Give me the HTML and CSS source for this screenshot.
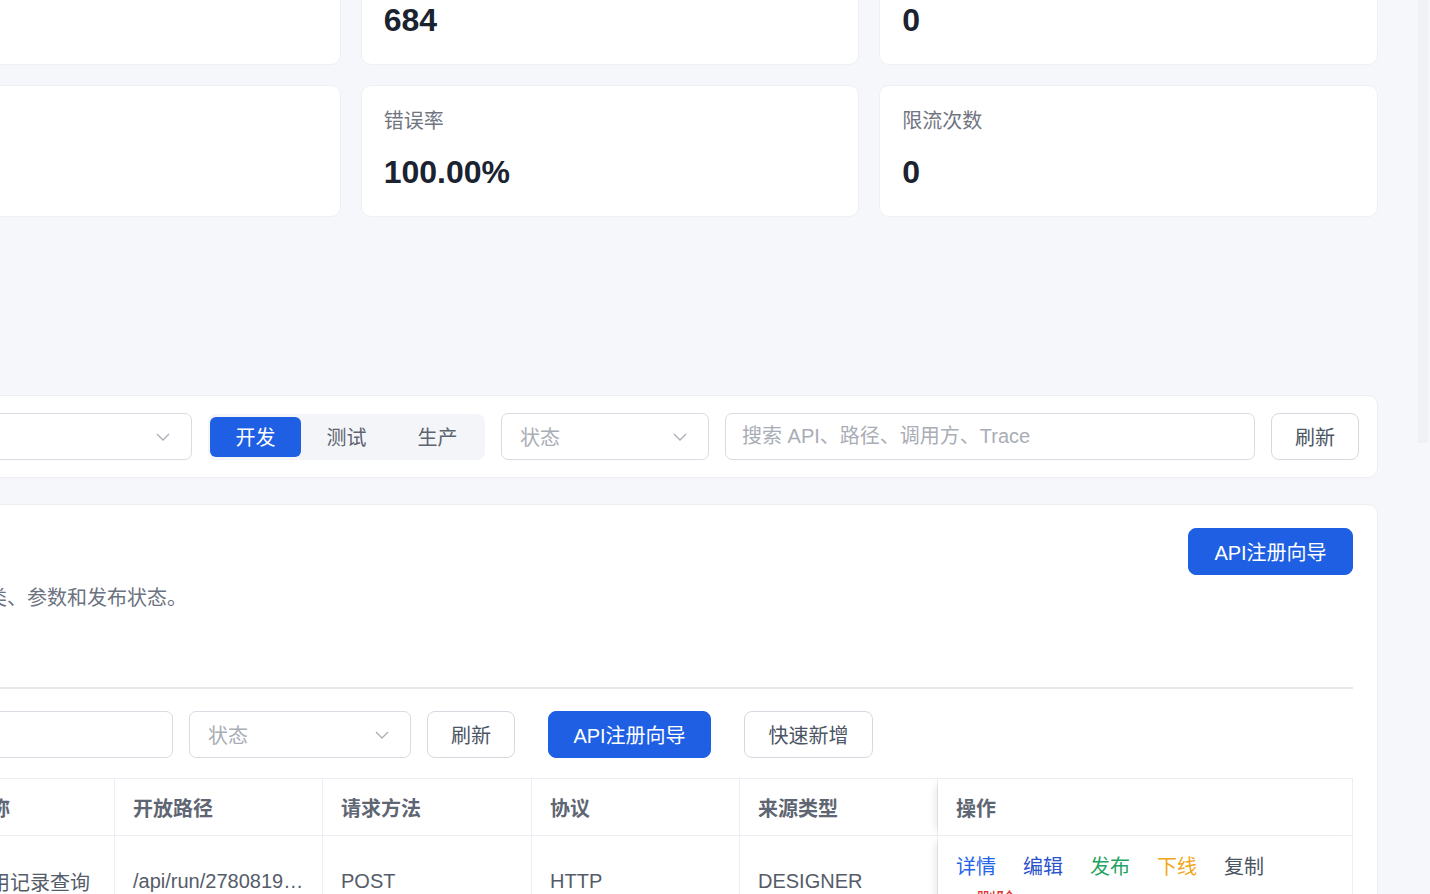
FILE: index.html
```html
<!DOCTYPE html>
<html lang="zh-CN">
<head>
    <meta charset="utf-8">
    <title>API 目录</title>
    <link rel="stylesheet" href="styles.css">
</head>
<body>
<div class="shell">
    <main class="content">

        <!-- summary numbers -->
        <section class="stats">
            <div class="stat-card"><div class="stat-label">调用总数</div><div class="stat-value">684</div></div>
            <div class="stat-card"><div class="stat-label">失败次数</div><div class="stat-value">684</div></div>
            <div class="stat-card"><div class="stat-label">平均耗时</div><div class="stat-value">0</div></div>
            <div class="stat-card"><div class="stat-label">成功率</div><div class="stat-value">0.00%</div></div>
            <div class="stat-card"><div class="stat-label">错误率</div><div class="stat-value">100.00%</div></div>
            <div class="stat-card"><div class="stat-label">限流次数</div><div class="stat-value">0</div></div>
        </section>

        <!-- environment / status filters -->
        <section class="filter-card">
            <div class="select select-group">
                <span class="select-text">全部分组</span>
                <svg class="chevron" viewBox="0 0 16 16"><polyline points="2,5 8,11 14,5"/></svg>
            </div>
            <div class="segmented">
                <span class="seg-item seg-active">开发</span>
                <span class="seg-item">测试</span>
                <span class="seg-item">生产</span>
            </div>
            <div class="select select-status">
                <span class="select-text">状态</span>
                <svg class="chevron" viewBox="0 0 16 16"><polyline points="2,5 8,11 14,5"/></svg>
            </div>
            <input class="input search" type="text" placeholder="搜索 API、路径、调用方、Trace">
            <button class="btn">刷新</button>
        </section>

        <!-- api list -->
        <section class="panel">
            <div class="panel-head">
                <div>
                    <h2 class="panel-title">API 目录</h2>
                    <p class="panel-desc">管理接口的分类、参数和发布状态。</p>
                </div>
                <button class="btn btn-primary">API注册向导</button>
            </div>

            <div class="tabs">
                <span class="tab tab-active">接口列表</span>
            </div>

            <div class="toolbar">
                <input class="input toolbar-search" type="text" placeholder="关键字">
                <div class="select toolbar-status">
                    <span class="select-text">状态</span>
                    <svg class="chevron" viewBox="0 0 16 16"><polyline points="2,5 8,11 14,5"/></svg>
                </div>
                <button class="btn btn-refresh">刷新</button>
                <button class="btn btn-primary btn-spaced">API注册向导</button>
                <button class="btn btn-quick btn-spaced">快速新增</button>
            </div>

            <table class="grid">
                <colgroup>
                    <col style="width:84px">
                    <col style="width:163px">
                    <col style="width:208px">
                    <col style="width:209px">
                    <col style="width:208px">
                    <col style="width:198px">
                    <col>
                </colgroup>
                <thead>
                    <tr>
                        <th>ID</th>
                        <th>名称</th>
                        <th>开放路径</th>
                        <th>请求方法</th>
                        <th>协议</th>
                        <th>来源类型</th>
                        <th class="col-action">操作</th>
                    </tr>
                </thead>
                <tbody>
                    <tr>
                        <td>12</td>
                        <td class="ellipsis">调用记录查询</td>
                        <td class="ellipsis">/api/run/2780819430125</td>
                        <td>POST</td>
                        <td>HTTP</td>
                        <td>DESIGNER</td>
                        <td class="col-action">
                            <div class="actions">
                                <a class="act act-blue">详情</a>
                                <a class="act act-navy">编辑</a>
                                <a class="act act-green">发布</a>
                                <a class="act act-orange">下线</a>
                                <a class="act act-gray">复制</a>
                                <a class="act act-red">删除</a>
                            </div>
                        </td>
                    </tr>
                </tbody>
            </table>
        </section>
    </main>

    <aside class="scroll-rail"><div class="scroll-thumb"></div></aside>
</div>
</body>
</html>
```

FILE: styles.css
```css
body
{
    margin: 0;
    background: #f5f7fa;
    font-family: "Liberation Sans", "Noto Sans CJK SC", sans-serif;
    font-size: 20px;
    color: #4b5563;
    overflow: hidden;
}
.shell
{
    display: flex;
    align-items: flex-start;
}
.content
{
    flex: none;
    width: 1536px;
    margin: -67px 0 0 -158px;
}

/* stat cards */
.stats
{
    display: grid;
    grid-template-columns: repeat(3, 1fr);
    gap: 20px;
}
.stat-card
{
    height: 132px;
    box-sizing: border-box;
    padding: 21px 22px 0 22px;
    background: #fff;
    border: 1px solid #eef0f4;
    border-radius: 10px;
}
.stat-label
{
    line-height: 28px;
    color: #70757f;
}
.stat-value
{
    margin-top: 17px;
    font-size: 32px;
    line-height: 40px;
    font-weight: bold;
    color: #1b2230;
}

/* filter bar */
.filter-card
{
    display: flex;
    align-items: center;
    gap: 16px;
    margin-top: 178px;
    padding: 17px 18px;
    background: #fff;
    border: 1px solid #eceef2;
    border-radius: 10px;
}
.select, .input
{
    height: 47px;
    box-sizing: border-box;
    border: 1px solid #d9dce2;
    border-radius: 7px;
    background: #fff;
    font-family: inherit;
    font-size: 20px;
}
.select
{
    display: flex;
    align-items: center;
    justify-content: space-between;
    padding: 0 20px 0 18px;
    color: #a9adb5;
}
.input
{
    padding: 0 16px;
    color: #4b5563;
    outline: none;
}
.input::placeholder
{
    color: #a9adb5;
}
.chevron
{
    width: 16px;
    height: 16px;
    fill: none;
    stroke: #a9adb5;
    stroke-width: 1.3;
}
.select-group
{
    width: 331px;
}
.select-status
{
    width: 208px;
}
.search
{
    flex: 1;
}
.segmented
{
    display: flex;
    width: 277px;
    height: 46px;
    box-sizing: border-box;
    padding: 3px 2px;
    background: #f3f5f8;
    border-radius: 8px;
}
.seg-item
{
    flex: 1;
    display: flex;
    align-items: center;
    justify-content: center;
    border-radius: 6px;
    color: #5d6370;
}
.seg-active
{
    background: #1f5fe3;
    color: #fff;
}

/* buttons */
.btn
{
    height: 47px;
    box-sizing: border-box;
    padding: 0 22px;
    border: 1px solid #d6d9df;
    border-radius: 8px;
    background: #fff;
    font-family: inherit;
    font-size: 20px;
    color: #4b5563;
}
.btn-primary
{
    border-color: #1f5fe3;
    background: #1f5fe3;
    color: #fff;
}
.filter-card .btn
{
    width: 88px;
    padding: 0;
}

/* list panel */
.panel
{
    margin-top: 26px;
    padding: 23px 24px 24px 24px;
    background: #fff;
    border: 1px solid #eceef2;
    border-radius: 10px;
}
.panel-head
{
    display: flex;
    justify-content: space-between;
    align-items: flex-start;
}
.panel-head .btn-primary
{
    width: 165px;
    padding: 0;
}
.panel-title
{
    margin: 0;
    font-size: 22px;
    line-height: 32px;
    color: #1b2230;
}
.panel-desc
{
    margin: 24px 0 0 0;
    line-height: 28px;
    color: #6b7280;
}
.tabs
{
    display: flex;
    margin-top: 18px;
    border-bottom: 2px solid #e6e8ec;
}
.tab
{
    height: 57px;
    line-height: 57px;
    color: #5d6370;
}
.tab-active
{
    color: #1f5fe3;
}
.toolbar
{
    display: flex;
    align-items: center;
    gap: 16px;
    margin-top: 22px;
}
.toolbar-search
{
    width: 306px;
}
.toolbar-status
{
    width: 222px;
}
.btn-refresh
{
    width: 88px;
    padding: 0;
}
.toolbar .btn-primary
{
    width: 163px;
    padding: 0;
}
.btn-quick
{
    width: 129px;
    padding: 0;
}
.btn-spaced
{
    margin-left: 17px;
}

/* table */
.grid
{
    width: 100%;
    margin-top: 20px;
    table-layout: fixed;
    border-collapse: separate;
    border-spacing: 0;
    border-top: 1px solid #ebeef3;
    border-left: 1px solid #ebeef3;
}
.grid th, .grid td
{
    padding: 0 18px;
    border-right: 1px solid #ebeef3;
    border-bottom: 1px solid #ebeef3;
    text-align: left;
}
.grid th
{
    height: 56px;
    font-weight: bold;
    color: #5f6673;
}
.grid td
{
    height: 90px;
    color: #555c69;
}
.ellipsis
{
    white-space: nowrap;
    overflow: hidden;
    text-overflow: ellipsis;
}
.col-action
{
    box-shadow: -8px 0 8px -6px rgba(0, 0, 0, 0.10);
}
.actions
{
    display: flex;
    flex-wrap: wrap;
    column-gap: 27px;
    row-gap: 6px;
    width: 330px;
    margin-top: 5px;
    line-height: 28px;
}
.act
{
    cursor: pointer;
}
.act-blue { color: #2563eb; }
.act-navy { color: #2a52c9; }
.act-green { color: #1fa463; }
.act-orange { color: #f2a516; }
.act-gray { color: #4b5563; }
.act-red { color: #e03131; margin-left: 20px; }

/* right scroll rail */
.scroll-rail
{
    flex: none;
    width: 52px;
    padding-left: 40px;
    box-sizing: border-box;
}
.scroll-thumb
{
    width: 10px;
    height: 443px;
    background: #eff1f4;
}
```
